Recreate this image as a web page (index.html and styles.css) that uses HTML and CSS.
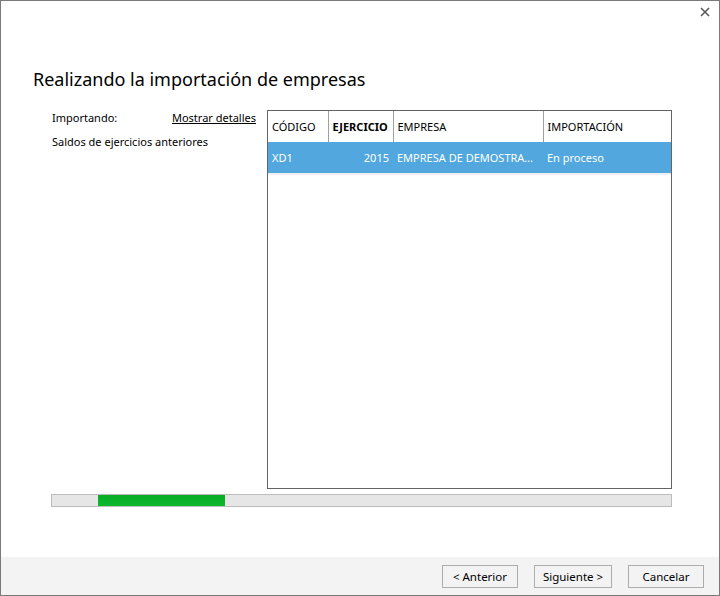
FILE: index.html
```html
<!DOCTYPE html>
<html lang="es">
<head>
    <meta charset="UTF-8">
    <title>Importación de empresas</title>
    <link rel="stylesheet" href="styles.css">
</head>
<body>
    <div class="dialog">
        <div class="top-bar">
            <button class="close-btn" title="Cerrar">
                <svg width="10" height="10" viewBox="0 0 10 10">
                    <path d="M1 1 L9 9 M9 1 L1 9" stroke="#5a5a5a" stroke-width="1.6" fill="none"/>
                </svg>
            </button>
        </div>

        <div class="main">
            <h1 class="title">Realizando la importación de empresas</h1>

            <div class="work-area">
                <div class="content">
                    <div class="status">
                        <div class="status-row">
                            <span>Importando:</span>
                            <a href="#" class="details-link">Mostrar detalles</a>
                        </div>
                        <div class="status-step">Saldos de ejercicios anteriores</div>
                    </div>

                    <div class="grid-box">
                        <table class="grid">
                            <colgroup>
                                <col class="col-code">
                                <col class="col-year">
                                <col class="col-company">
                                <col>
                            </colgroup>
                            <thead>
                                <tr>
                                    <th>CÓDIGO</th>
                                    <th class="sorted">EJERCICIO</th>
                                    <th>EMPRESA</th>
                                    <th>IMPORTACIÓN</th>
                                </tr>
                            </thead>
                            <tbody>
                                <tr class="selected">
                                    <td>XD1</td>
                                    <td class="num">2015</td>
                                    <td class="ellipsis">EMPRESA DE DEMOSTRACIÓN</td>
                                    <td>En proceso</td>
                                </tr>
                            </tbody>
                        </table>
                    </div>
                </div>

                <div class="progress">
                    <div class="progress-fill"></div>
                </div>
            </div>
        </div>

        <div class="footer">
            <button class="btn">&lt; Anterior</button>
            <button class="btn btn-next">Siguiente &gt;</button>
            <button class="btn">Cancelar</button>
        </div>
    </div>
</body>
</html>
```

FILE: styles.css
```css
body {
    margin: 0;
    font-family: "Noto Sans", "Open Sans", sans-serif;
    font-size: 11px;
    color: #000;
    background: #fff;
}
.dialog {
    width: 720px;
    height: 596px;
    box-sizing: border-box;
    border: 1px solid #7a7a7a;
    display: flex;
    flex-direction: column;
    background: #fff;
}
.top-bar {
    height: 64px;
    display: flex;
    justify-content: flex-end;
    align-items: flex-start;
}
.close-btn {
    border: none;
    background: none;
    padding: 6px 9px 0 0;
    cursor: pointer;
    line-height: 0;
}
.main {
    flex: 1;
    display: flex;
    flex-direction: column;
}
.title {
    margin: 0 0 0 32px;
    font-size: 18px;
    font-weight: normal;
    line-height: 28px;
    height: 45px;
}
.work-area {
    margin-left: 50px;
    width: 621px;
}
.content {
    display: flex;
    height: 379px;
}
.status {
    width: 216px;
    padding-left: 1px;
    box-sizing: border-box;
}
.status-row {
    display: flex;
    justify-content: space-between;
    padding-right: 11px;
    line-height: 16px;
}
.details-link {
    color: #000;
    text-decoration: underline;
}
.status-step {
    margin-top: 8px;
    line-height: 16px;
}
.grid-box {
    flex: 1;
    border: 1px solid #646464;
    background: #fff;
}
.grid {
    width: 100%;
    border-collapse: collapse;
    table-layout: fixed;
}
.col-code {
    width: 60px;
}
.col-year {
    width: 65px;
}
.col-company {
    width: 150px;
}
.grid th {
    height: 31px;
    padding: 0 4px;
    text-align: left;
    font-weight: normal;
    border-right: 1px solid #a0a0a0;
}
.grid th:last-child {
    border-right: none;
}
.grid th.sorted {
    font-weight: bold;
}
.grid td {
    height: 31px;
    padding: 0 4px;
    white-space: nowrap;
    overflow: hidden;
    border-bottom: 2px solid #f0f0f0;
}
.grid td.num {
    text-align: right;
}
.grid td.ellipsis {
    text-overflow: ellipsis;
}
.grid tr.selected td {
    background: #51a7de;
    color: #fff;
}
.progress {
    margin-top: 5px;
    height: 11px;
    border: 1px solid #bcbcbc;
    background: #e6e6e6;
}
.progress-fill {
    margin-left: 46px;
    width: 127px;
    height: 100%;
    background: linear-gradient(#07ad24, #0eb82e);
}
.footer {
    height: 38px;
    background: #f3f3f3;
    display: flex;
    justify-content: flex-end;
    align-items: flex-start;
    gap: 16px;
    padding: 8px 15px 0 0;
    box-sizing: border-box;
}
.btn {
    width: 76px;
    height: 23px;
    border: 1px solid #adadad;
    background: #f3f3f3;
    font-family: inherit;
    font-size: 11.5px;
    color: #000;
    padding: 0;
}
.btn-next {
    width: 78px;
}
```
